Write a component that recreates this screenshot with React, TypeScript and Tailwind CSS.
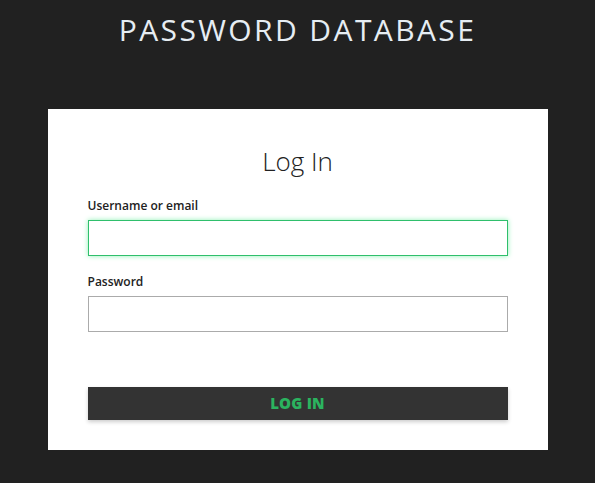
import React, { useState } from "react";

const App: React.FC = () => {
  const [user, setUser] = useState("");
  const [pass, setPass] = useState("");

  return (
    <div className="min-h-[483px] w-full bg-[#212121] flex flex-col items-center" style={{ fontFamily: '"Open Sans", "Liberation Sans", sans-serif' }}>
      <h1 className="pt-[15px] text-[30px] leading-[30px] font-normal tracking-[2.4px] text-[#e6edf3]">
        PASSWORD DATABASE
      </h1>
      <form
        className="mt-[64px] w-[500px] bg-white px-[40px] pt-[36px] pb-[30px] flex flex-col"
        onSubmit={(e) => e.preventDefault()}
      >
        <h2 className="text-center text-[26px] leading-[32px] font-light text-[#222]">Log In</h2>
        <label htmlFor="user" className="mt-[21px] text-[12px] leading-[16px] font-semibold text-[#222]">
          Username or email
        </label>
        <input
          id="user"
          type="text"
          value={user}
          onChange={(e) => setUser(e.target.value)}
          className="mt-[6px] h-[36px] w-full border border-[#2fbf6c] shadow-[0_0_5px_#8ff0b5] px-2 text-sm outline-none"
        />
        <label htmlFor="pass" className="mt-[18px] text-[12px] leading-[16px] font-semibold text-[#222]">
          Password
        </label>
        <input
          id="pass"
          type="password"
          value={pass}
          onChange={(e) => setPass(e.target.value)}
          className="mt-[6px] h-[36px] w-full border border-[#ababab] px-2 text-sm outline-none"
        />
        <button
          type="submit"
          className="mt-[55px] h-[33px] w-full bg-[#333333] text-[#2bb35f] text-[15px] font-extrabold tracking-[0.2px] shadow-[0_2px_4px_rgba(0,0,0,0.2)]"
        >
          LOG IN
        </button>
      </form>
    </div>
  );
};

export default App;
